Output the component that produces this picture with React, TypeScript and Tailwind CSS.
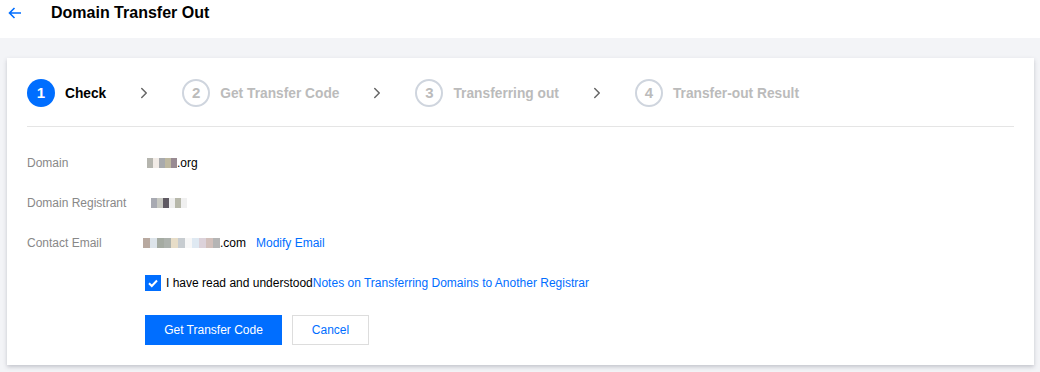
import { ChevronRight } from "lucide-react";

const steps = [
  { n: 1, label: "Check" },
  { n: 2, label: "Get Transfer Code" },
  { n: 3, label: "Transferring out" },
  { n: 4, label: "Transfer-out Result" },
];

// pixelated blocks standing in for masked text
function Masked({ cells, w = 6 }: { cells: string[]; w?: number }) {
  return (
    <span className="inline-flex items-center h-[10px]">
      {cells.map((c, i) => (
        <span key={i} className="h-[10px] inline-block" style={{ background: c, width: w }} />
      ))}
    </span>
  );
}

export default function App() {
  return (
    <div className="w-[1040px] h-[372px] bg-[#f3f4f7] font-['Liberation_Sans',Arial,sans-serif] text-[12px] text-black flex flex-col">
      {/* Header */}
      <div className="h-[38px] pb-[12px] bg-white flex items-center shrink-0">
        <svg className="ml-[7px] w-[16px] h-[16px]" viewBox="0 0 16 16" fill="none" stroke="#006eff" strokeWidth={1.6}>
          <path d="M14 8H2.5M7.5 3 2.5 8l5 5" />
        </svg>
        <h1 className="ml-[28px] text-[16px] font-bold text-[#000]">Domain Transfer Out</h1>
      </div>

      {/* Card */}
      <div className="mt-[20px] mx-[7px] mr-[6px] bg-white shadow-[0_2px_4px_rgba(54,58,80,0.25)] px-[20px] pt-[21px] h-[307px]">
        {/* Steps */}
        <div className="flex items-center h-[28px]">
          {steps.map((s, i) => (
            <div key={s.n} className="flex items-center">
              <div
                className={
                  s.n === 1
                    ? "w-[28px] h-[28px] rounded-full bg-[#006eff] text-white flex items-center justify-center text-[15px] font-bold"
                    : "w-[28px] h-[28px] rounded-full border-2 border-[#cfd5de] text-[#bbbbbb] flex items-center justify-center text-[15px] font-bold"
                }
              >
                {s.n}
              </div>
              <span
                className={
                  s.n === 1
                    ? "ml-[10px] mt-[2px] text-[13.75px] font-bold text-black"
                    : "ml-[10px] mt-[2px] text-[13.75px] font-bold text-[#bbbbbb]"
                }
              >
                {s.label}
              </span>
              {i < steps.length - 1 && (
                <ChevronRight className="mx-[29px] w-[18px] h-[18px] text-[#666]" strokeWidth={2} />
              )}
            </div>
          ))}
        </div>
        <div className="mt-[19px] border-t border-[#e5e5e5]" />

        {/* Fields */}
        <div className="mt-[27px] flex flex-col gap-[22px]">
          <div className="flex items-center h-[18px]">
            <span className="w-[120px] text-[#888]">Domain</span>
            <span className="flex items-center">
              <Masked cells={["#b5b5ae", "#f1ebe6", "#a8aaad", "#beb8a0", "#988a92"]} />
              <span>.org</span>
            </span>
          </div>
          <div className="flex items-center h-[18px]">
            <span className="w-[118px] text-[#888]">Domain Registrant</span>
            <span className="flex items-center">
              <Masked cells={["#ffffff", "#a8aab2", "#c8c9c2", "#5f5a63", "#eeeeee", "#b7b8aa", "#f0f0f0"]} />
            </span>
          </div>
          <div className="flex items-center h-[18px]">
            <span className="w-[116px] text-[#888]">Contact Email</span>
            <span className="flex items-center">
              <Masked
                w={7}
                cells={["#b8a9a0", "#dde4ea", "#a5aba2", "#adb2ad", "#e7ddc8", "#c7ccd0", "#f7f7f7", "#dfe9f2", "#dcd2da", "#d2c0bb", "#b5b5b5"]}
              />
              <span>.com</span>
            </span>
            <span className="ml-[10px] text-[#006eff]">Modify Email</span>
          </div>
        </div>

        {/* Agreement */}
        <div className="mt-[22px] ml-[118px] flex items-center h-[18px]">
          <span className="w-[16px] h-[16px] bg-[#006eff] flex items-center justify-center">
            <svg className="w-[12px] h-[12px]" viewBox="0 0 12 12" fill="none" stroke="white" strokeWidth={2}>
              <path d="M2 6.2 4.8 9 10 3.5" />
            </svg>
          </span>
          <span className="ml-[5px]">I have read and understood</span>
          <span className="text-[#006eff]">Notes on Transferring Domains to Another Registrar</span>
        </div>

        {/* Buttons */}
        <div className="mt-[23px] ml-[118px] flex items-center gap-[10px]">
          <button className="w-[137px] h-[30px] bg-[#006eff] text-white text-[12px]">Get Transfer Code</button>
          <button className="w-[77px] h-[30px] border border-[#dddddd] bg-white text-[#006eff] text-[12px]">Cancel</button>
        </div>
      </div>
    </div>
  );
}
